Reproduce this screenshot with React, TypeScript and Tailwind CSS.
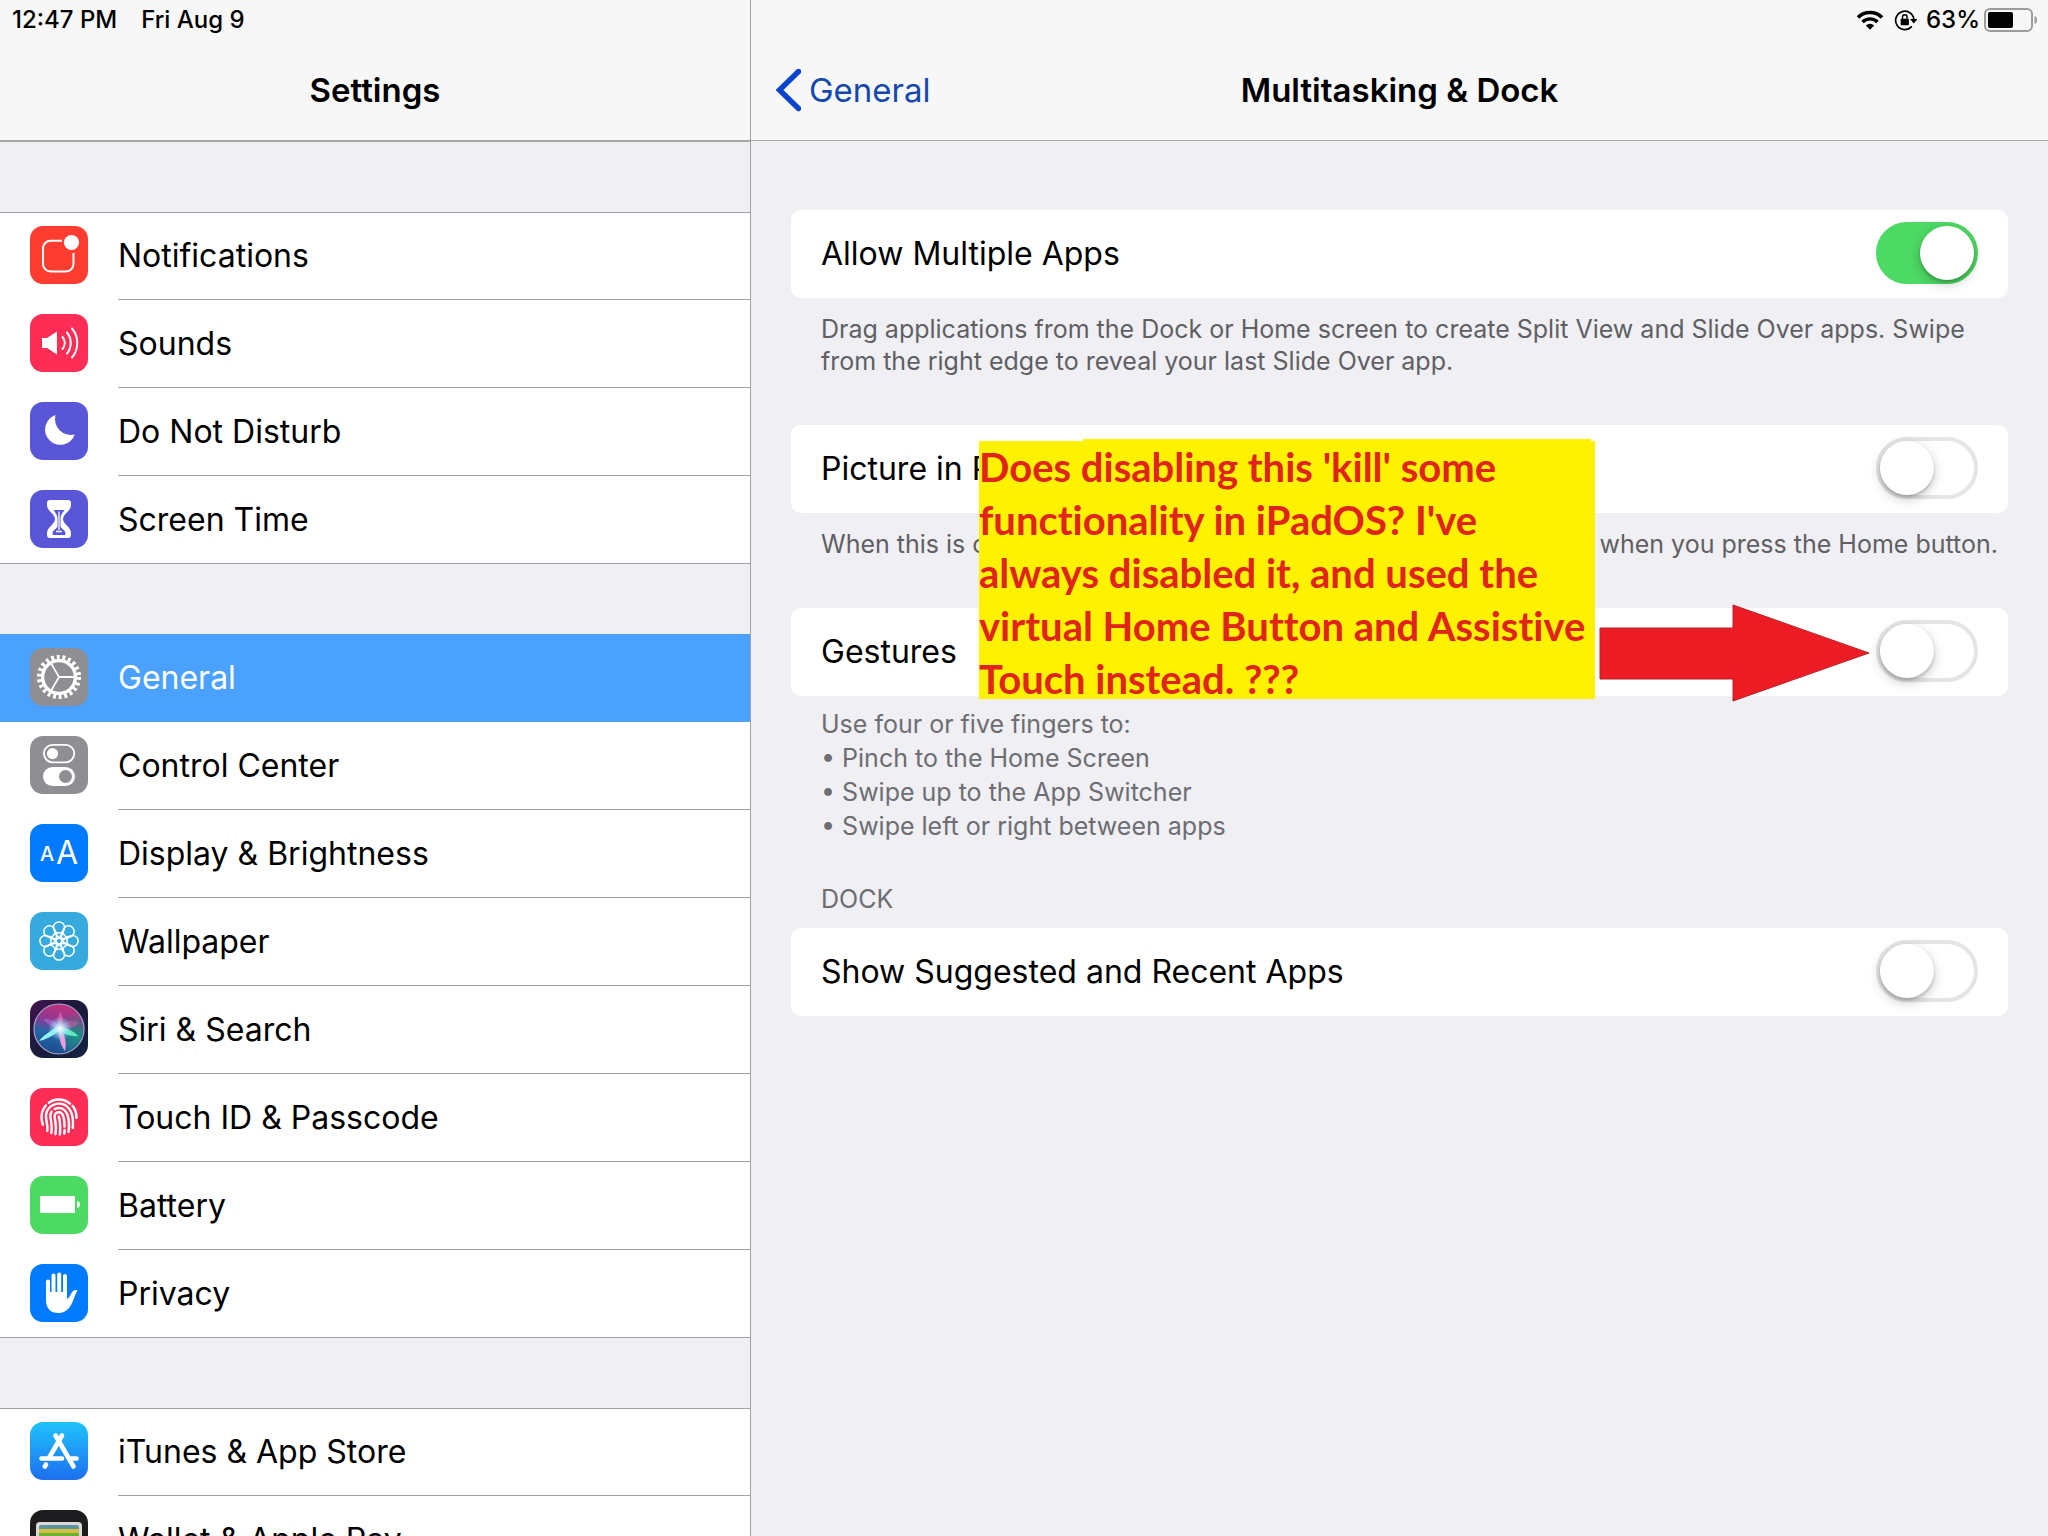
import React, { useState } from 'react';
import { IoIosFingerPrint } from 'react-icons/io';

type IconProps = { children?: React.ReactNode; bg: string };

const Tile: React.FC<IconProps> = ({ children, bg }) => (
  <svg viewBox="0 0 58 58" className="mb-0.5 h-[58px] w-[58px] shrink-0 overflow-hidden rounded-[13px]" aria-hidden="true">
    <rect width="58" height="58" fill={bg} />
    {children}
  </svg>
);

const NotificationsIcon = () => (
  <Tile bg="#fe3c30">
    <path d="M32 14.8H20.5a7.5 7.5 0 0 0-7.5 7.5v15.6a7.5 7.5 0 0 0 7.5 7.5H36a7.5 7.5 0 0 0 7.5-7.5V27" fill="none" stroke="#fff" strokeWidth="2" />
    <circle cx="41.5" cy="16.5" r="7.6" fill="#fff" />
  </Tile>
);

const SoundsIcon = () => (
  <Tile bg="#fe2d55">
    <path d="M12 24h5l10-6.5v23L17 34h-5z" fill="#fff" />
    <path d="M32.5 23c3 3.6 3 8.4 0 12M37 18.5c5 6 5 15 0 21M42 14.5c7 8 7 21 0 29" fill="none" stroke="#fff" strokeWidth="2" strokeLinecap="round" />
  </Tile>
);

const MoonIcon = () => (
  <Tile bg="#5856d6">
    <path d="M25.5 13A15.3 15.3 0 1 0 44.8 32.5A16 16 0 0 1 25.5 13z" fill="#fff" />
  </Tile>
);

const HourglassIcon = () => (
  <Tile bg="#5856d6">
    <path d="M20 10h18c2 0 3 1 3 3v2c0 6-8 9-8 14s8 8 8 14v2c0 2-1 3-3 3H20c-2 0-3-1-3-3v-2c0-6 8-9 8-14s-8-8-8-14v-2c0-2 1-3 3-3z" fill="#fff" />
    <path d="M23.5 20h11c-1 2-4 4.500-4 8.500V36c0 3 4.500 3 5 7.500c0 1-.5 1.500-1.500 1.500H24c-1 0-1.500-.5-1.500-1.500c.5-4.500 5-4.500 5-7.500v-7.500c0-4-3-6.500-4-8.500z" fill="#5856d6" />
    <path d="M29 21.5V40M26 41.5h6" fill="none" stroke="#fff" strokeWidth="1.3" />
  </Tile>
);

const GearIcon = () => (
  <Tile bg="#8e8e93">
    <circle cx="29" cy="29" r="19.6" fill="none" stroke="#fff" strokeWidth="5" strokeDasharray="2.9 2.698" />
    <circle cx="29" cy="29" r="16.4" fill="none" stroke="#fff" strokeWidth="3.4" />
    <path d="M29 29h16M29 29l-8-13.9M29 29l-8 13.9" stroke="#fff" strokeWidth="1.8" />
  </Tile>
);

const ControlCenterIcon = () => (
  <Tile bg="#8e8e93">
    <rect x="13.9" y="8.9" width="30.4" height="17.4" rx="8.7" fill="none" stroke="#fff" strokeWidth="1.8" />
    <circle cx="22.5" cy="17.6" r="5.6" fill="#fff" />
    <rect x="13" y="31" width="32" height="19" rx="9.5" fill="#fff" />
    <circle cx="35.5" cy="40.5" r="6.5" fill="#8e8e93" />
  </Tile>
);

const DisplayIcon = () => (
  <Tile bg="#007aff">
    <text x="10" y="37" fontSize="20" fontWeight="500" fill="#fff">A</text>
    <text x="26" y="40" fontSize="32" fill="#fff">A</text>
  </Tile>
);

const WallpaperIcon = () => (
  <Tile bg="#36aadc">
    <g fill="none" stroke="#fff" strokeWidth="1.5">
      <circle cx="29" cy="29" r="3" />
      {[0, 45, 90, 135, 180, 225, 270, 315].map((deg) => (
        <g key={deg} transform={`rotate(${deg} 29 29)`}>
          <circle cx="29" cy="15.5" r="5.6" />
          <path d="M24.3 18.5c1 3 3 5 4.700 7.500c1.700-2.500 3.700-4.500 4.700-7.500" />
        </g>
      ))}
    </g>
  </Tile>
);

const SiriIcon = () => (
  <Tile bg="url(#siriBack)">
    <defs>
      <linearGradient id="siriBack" x1="0" y1="0" x2="1" y2="1">
        <stop offset="0" stopColor="#42124f" />
        <stop offset="0.45" stopColor="#1b1a3c" />
        <stop offset="1" stopColor="#14233f" />
      </linearGradient>
      <linearGradient id="siriOrb" x1="0.6" y1="0" x2="0.4" y2="1">
        <stop offset="0" stopColor="#c42f7c" />
        <stop offset="0.35" stopColor="#8d3a92" />
        <stop offset="0.6" stopColor="#2466a4" />
        <stop offset="1" stopColor="#1b4b90" />
      </linearGradient>
      <radialGradient id="siriTeal" cx="0.9" cy="0.65" r="0.5">
        <stop offset="0" stopColor="#1f8f7e" />
        <stop offset="1" stopColor="#1f8f7e" stopOpacity="0" />
      </radialGradient>
      <radialGradient id="siriGlow">
        <stop offset="0" stopColor="#fff" />
        <stop offset="0.35" stopColor="#c8efff" stopOpacity="0.8" />
        <stop offset="1" stopColor="#8fd8ff" stopOpacity="0" />
      </radialGradient>
    </defs>
    <circle cx="29" cy="29" r="25" fill="url(#siriOrb)" stroke="#a9a4c8" strokeWidth="1.2" />
    <circle cx="29" cy="29" r="24" fill="url(#siriTeal)" />
    <path d="M29 26C21 30 13 36 9 41c8-2 16-6 21-12z" fill="#8ff5ff" />
    <path d="M28 28c1 8 2 17 7 23c2-8 0-17-5-23z" fill="#f09ae0" />
    <path d="M29 26c8 2 15 5 19 10c-7 1-15-2-20-7z" fill="#5be8bd" />
    <path d="M29 28c6-8 15-9 20-5c-5 5-13 6-20 5z" fill="#d65bb0" fillOpacity="0.5" />
    <path d="M29 28c-7-1-13-4-15-9c7-1 12 3 15 9z" fill="#b06ae0" fillOpacity="0.6" />
    <path d="M29 28c-2-6-1-11 1-16c4 5 4 11-1 16z" fill="#ff7ac0" fillOpacity="0.5" />
    <circle cx="30" cy="28.5" r="12" fill="url(#siriGlow)" />
  </Tile>
);

const TouchIdIcon = () => (
  <Tile bg="#fe2d55">
    <IoIosFingerPrint x="6" y="6" size={46} color="#fff" />
  </Tile>
);

const BatteryTileIcon = () => (
  <Tile bg="#4cd964">
    <rect x="10" y="20" width="35" height="17" rx="1" fill="#fff" />
    <path d="M47 25c4 .5 4 6.500 0 7z" fill="#fff" />
  </Tile>
);

const PrivacyIcon = () => (
  <Tile bg="#007aff">
    <path d="M18 34V17.5M23.5 30V11.5M29.2 30V10.5M35 32V12" fill="none" stroke="#fff" strokeWidth="4" strokeLinecap="round" />
    <path d="M16 28h21v7c2-1 3-3 4.500-6c1.500-2.500 4-3.500 6-2.500c-1.500 2-2.500 5-4 9c-3 8-7 13.500-15 13.500c-8 0-12.500-4.500-12.500-13z" fill="#fff" />
  </Tile>
);

const AppStoreIcon = () => (
  <Tile bg="url(#storeBack)">
    <defs>
      <linearGradient id="storeBack" x1="0" y1="0" x2="0" y2="1">
        <stop offset="0" stopColor="#1fc3fb" />
        <stop offset="1" stopColor="#1d6ff0" />
      </linearGradient>
    </defs>
    <g stroke="#fff" strokeWidth="4.6" strokeLinecap="round">
      <path d="M32 13.5L19.5 35" />
      <path d="M25.5 13.5L43.5 44.5" />
      <path d="M16 42.5L14.8 44.5" />
      <path d="M11.5 36.5H32" />
      <path d="M40.5 36.5H46.5" />
    </g>
  </Tile>
);

const WalletIcon = () => (
  <Tile bg="#1d1d1f">
    <rect x="6" y="12" width="46" height="40" rx="4" fill="#d9d9d6" />
    <path d="M9 19v-1.500a2.500 2.500 0 0 1 2.500-2.500h35a2.500 2.500 0 0 1 2.500 2.500V19z" fill="#5b93a3" />
    <rect x="9" y="19" width="40" height="4" fill="#d9bd3c" />
    <rect x="9" y="23" width="40" height="24" fill="#6bb135" />
  </Tile>
);

const MENU_GROUPS = [
  [
    { label: 'Notifications', Icon: NotificationsIcon },
    { label: 'Sounds', Icon: SoundsIcon },
    { label: 'Do Not Disturb', Icon: MoonIcon },
    { label: 'Screen Time', Icon: HourglassIcon },
  ],
  [
    { label: 'General', Icon: GearIcon },
    { label: 'Control Center', Icon: ControlCenterIcon },
    { label: 'Display & Brightness', Icon: DisplayIcon },
    { label: 'Wallpaper', Icon: WallpaperIcon },
    { label: 'Siri & Search', Icon: SiriIcon },
    { label: 'Touch ID & Passcode', Icon: TouchIdIcon },
    { label: 'Battery', Icon: BatteryTileIcon },
    { label: 'Privacy', Icon: PrivacyIcon },
  ],
  [
    { label: 'iTunes & App Store', Icon: AppStoreIcon },
    { label: 'Wallet & Apple Pay', Icon: WalletIcon },
  ],
];

const MenuGroup: React.FC<{ items: (typeof MENU_GROUPS)[number]; active: string; onSelect: (label: string) => void }> = ({ items, active, onSelect }) => (
  <ul className="border-y border-[#a0a0a5] bg-white">
    {items.map(({ label, Icon }, i) => {
      const selected = label === active;
      const last = i === items.length - 1;
      return (
        <li key={label} className={`first:-mt-px ${selected ? 'bg-[#4ba1ff] text-white' : ''}`}>
          <a
            href="#"
            onClick={(e) => { e.preventDefault(); onSelect(label); }}
            className={`flex items-center gap-[30px] pl-[30px] ${last ? 'h-[87px]' : 'h-[88px]'}`}
          >
            <Icon />
            <span className={`flex h-full flex-1 items-center border-b pt-px ${last || selected ? 'border-transparent' : 'border-[#a0a0a5]'}`}>
              {label}
            </span>
          </a>
        </li>
      );
    })}
  </ul>
);

const SwitchRow: React.FC<{ id: string; label: string; defaultOn?: boolean }> = ({ id, label, defaultOn = false }) => {
  const [on, setOn] = useState(defaultOn);
  return (
    <div className="flex h-[88px] items-center justify-between rounded-[10px] bg-white px-[30px]">
      <label htmlFor={id}>{label}</label>
      <input
        id={id}
        type="checkbox"
        role="switch"
        checked={on}
        onChange={(e) => setOn(e.target.checked)}
        className="mb-0.5 h-[62px] w-[102px] shrink-0 cursor-pointer appearance-none rounded-full border-4 border-[#e5e5e5] bg-white before:block before:h-[54px] before:w-[54px] before:rounded-full before:bg-white before:shadow-[0_4px_12px_rgba(0,0,0,0.22),0_2px_3px_rgba(0,0,0,0.18)] before:content-[''] checked:border-[#4cd964] checked:bg-[#4cd964] checked:before:ml-10"
      />
    </div>
  );
};

const StatusIcons = () => (
  <div className="flex items-center text-2xl font-medium">
    <svg viewBox="0 0 28 20" className="mr-2.5 h-5 w-7" aria-hidden="true">
      <path d="M2 7.500a17 17 0 0 1 24 0" fill="none" stroke="#000" strokeWidth="3.6" />
      <path d="M6.5 12a10.500 10.500 0 0 1 15 0" fill="none" stroke="#000" strokeWidth="3.4" />
      <path d="M9.8 15.500a6 6 0 0 1 8.400 0L14 19.800z" />
    </svg>
    <svg viewBox="0 0 24 22" className="mr-2 h-[22px] w-6" aria-hidden="true">
      <path d="M17.8 17.4A9.2 9.2 0 1 1 19.9 10" fill="none" stroke="#000" strokeWidth="1.7" />
      <path d="M16 10h7.500l-3.700 4.500z" />
      <rect x="6.7" y="9.8" width="8.2" height="6.4" rx="0.8" />
      <path d="M8.5 10V8a2.300 2.300 0 0 1 4.600 0v2" fill="none" stroke="#000" strokeWidth="1.4" />
    </svg>
    <span>63%</span>
    <svg viewBox="0 0 54 24" className="ml-1 h-6 w-[54px]" aria-hidden="true">
      <rect x="1" y="1" width="47" height="22" rx="5" fill="none" stroke="#9c9c9c" strokeWidth="2" />
      <rect x="4" y="4" width="25" height="16" rx="2" />
      <path d="M50.5 8c3.500 1 3.500 7 0 8z" fill="#9c9c9c" />
    </svg>
  </div>
);

export default function App() {
  const [active, setActive] = useState('General');

  return (
    <div className="grid h-screen grid-cols-[375fr_649fr] overflow-hidden bg-[#efeff4] font-['Inter',sans-serif] text-[32px] leading-10 text-black">
      {/* Sidebar */}
      <aside className="min-w-0">
        <header className="flex h-[142px] flex-col border-b-2 border-[#a7a7aa] bg-[#f7f7f7]">
          <div className="flex h-10 items-center gap-6 px-3 text-2xl font-medium">
            <span>12:47 PM</span>
            <span>Fri Aug 9</span>
          </div>
          <h1 className="flex h-[100px] items-center justify-center text-[33px] font-semibold">Settings</h1>
        </header>
        <nav className="flex flex-col gap-[70px] pt-[70px]">
          {MENU_GROUPS.map((items) => (
            <MenuGroup key={items[0].label} items={items} active={active} onSelect={setActive} />
          ))}
        </nav>
      </aside>

      {/* Detail pane */}
      <main className="min-w-0 border-l border-[#a0a0a5]">
        <header className="flex h-[141px] flex-col border-b border-[#a7a7aa] bg-[#f7f7f7]">
          <div className="flex h-10 items-center justify-end px-2.5">
            <StatusIcons />
          </div>
          <div className="grid h-[100px] grid-cols-[1fr_auto_1fr] items-center text-[33px]">
            <button className="flex items-center gap-2 pl-6 text-[#1448ae]">
              <svg viewBox="0 0 26 44" className="h-11 w-[26px]" aria-hidden="true">
                <path d="M23.5 3.5L4.5 22L23.5 40.5" fill="none" stroke="#0a44cc" strokeWidth="5.4" strokeLinecap="round" />
              </svg>
              General
            </button>
            <h2 className="font-semibold">Multitasking &amp; Dock</h2>
          </div>
        </header>

        <div className="px-10 pt-[69px]">
          <section>
            <SwitchRow id="multiple-apps" label="Allow Multiple Apps" defaultOn />
            <p className="pt-[15px] pl-[30px] text-[25px] leading-8 text-[#5f5f64]">
              Drag applications from the Dock or Home screen to create Split View and Slide Over apps. Swipe from the right edge to reveal your last Slide Over app.
            </p>
          </section>

          <section className="relative mt-12">
            <SwitchRow id="picture-in-picture" label="Picture in Picture" />
            <p className="flex justify-between pt-[15px] pr-2.5 pl-[30px] text-[25px] leading-8 whitespace-nowrap text-[#5f5f64]">
              <span>When this is on, videos will continue playing in an overlay</span>
              <span>when you press the Home button.</span>
            </p>
            {/* Sticky note */}
            <p className="absolute top-4 left-[188px] z-10 h-[258px] w-[616px] bg-[#fff200] font-['Lato',sans-serif] text-[40px] leading-[53px] font-bold whitespace-nowrap text-[#e0241b] [font-variant-ligatures:none] before:absolute before:-top-0.5 before:right-1 before:left-[104px] before:h-0.5 before:bg-[#fff200] before:content-['']">
              Does disabling this 'kill' some<br />
              functionality in iPadOS? I've<br />
              always disabled it, and used the<br />
              virtual Home Button and Assistive<br />
              Touch instead. ???
            </p>
          </section>

          <section className="relative mt-12">
            <SwitchRow id="gestures" label="Gestures" />
            <svg viewBox="0 0 272 98" className="absolute -top-1 right-[137px] h-[98px] w-[272px]" aria-hidden="true">
              <path d="M1 24H134V1L270 49L134 97V75H1z" fill="#ed1c24" stroke="#b5232a" strokeWidth="1" strokeLinejoin="round" />
            </svg>
            <div className="pt-[11px] pl-[30px] text-[25px] leading-[34px] text-[#6d6d72]">
              <p>Use four or five fingers to:</p>
              <ul>
                <li>• Pinch to the Home Screen</li>
                <li>• Swipe up to the App Switcher</li>
                <li>• Swipe left or right between apps</li>
              </ul>
            </div>
          </section>

          <section className="pt-[39px]">
            <h3 className="pb-3 pl-[30px] text-[25px] leading-[34px] text-[#6d6d72]">DOCK</h3>
            <SwitchRow id="suggested-apps" label="Show Suggested and Recent Apps" />
          </section>
        </div>
      </main>
    </div>
  );
}
